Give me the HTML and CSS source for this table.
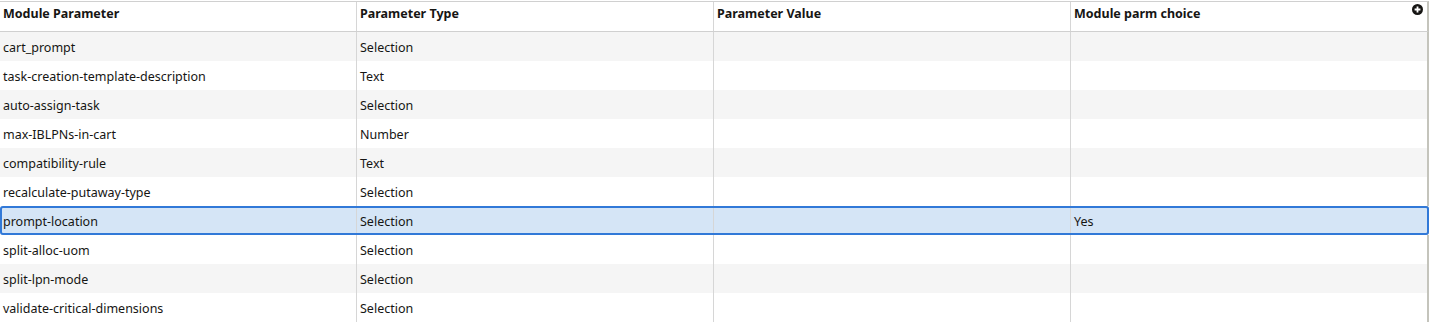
FILE: index.html
```html
<!DOCTYPE html>
<html>
<head>
<meta charset="utf-8">
<link rel="stylesheet" href="styles.css">
</head>
<body>
<div class="table">
  <div class="row head">
    <div class="cell">Module Parameter</div>
    <div class="cell">Parameter Type</div>
    <div class="cell">Parameter Value</div>
    <div class="cell">Module parm choice</div>
    <svg class="add" width="11" height="11" viewBox="0 0 11 11"><circle cx="5.5" cy="5.5" r="5.5" fill="#161513"/><path d="M5.5 2.6v5.8M2.6 5.5h5.8" stroke="#fff" stroke-width="1.8"/></svg>
  </div>
  <div class="row alt"><div class="cell">cart_prompt</div><div class="cell">Selection</div><div class="cell"></div><div class="cell"></div></div>
  <div class="row"><div class="cell">task-creation-template-description</div><div class="cell">Text</div><div class="cell"></div><div class="cell"></div></div>
  <div class="row alt"><div class="cell">auto-assign-task</div><div class="cell">Selection</div><div class="cell"></div><div class="cell"></div></div>
  <div class="row"><div class="cell">max-IBLPNs-in-cart</div><div class="cell">Number</div><div class="cell"></div><div class="cell"></div></div>
  <div class="row alt"><div class="cell">compatibility-rule</div><div class="cell">Text</div><div class="cell"></div><div class="cell"></div></div>
  <div class="row"><div class="cell">recalculate-putaway-type</div><div class="cell">Selection</div><div class="cell"></div><div class="cell"></div></div>
  <div class="row selected"><div class="cell">prompt-location</div><div class="cell">Selection</div><div class="cell"></div><div class="cell">Yes</div></div>
  <div class="row"><div class="cell">split-alloc-uom</div><div class="cell">Selection</div><div class="cell"></div><div class="cell"></div></div>
  <div class="row alt"><div class="cell">split-lpn-mode</div><div class="cell">Selection</div><div class="cell"></div><div class="cell"></div></div>
  <div class="row"><div class="cell">validate-critical-dimensions</div><div class="cell">Selection</div><div class="cell"></div><div class="cell"></div></div>
</div>
</body>
</html>
```

FILE: styles.css
```css
html, body {
  margin: 0;
  padding: 0;
  background: #fff;
}
body {
  font-family: "Noto Sans", "Open Sans", sans-serif;
  font-size: 12.5px;
  color: #161513;
  overflow: hidden;
}
.table {
  width: 1429px;
  padding-top: 1px;
}
.row {
  display: grid;
  grid-template-columns: 356px 357px 357px 357px;
  height: 29px;
  border-right: 2px solid #c4c4bc;
  box-sizing: border-box;
  position: relative;
}
.row.head {
  height: 31px;
  border-top: 1px solid #d0d0d0;
  border-bottom: 1px solid #d0d0d0;
  font-weight: 700;
}
.row.head .cell {
  padding-top: 0;
  padding-bottom: 7px;
}
.row.alt {
  background: #f5f5f5;
}
.row.selected {
  background: #d5e5f6;
  outline: 2px solid #3179d8;
  outline-offset: -2px;
  border-radius: 3px;
}
.cell {
  display: flex;
  align-items: center;
  padding-left: 3px;
  padding-top: 2px;
  border-left: 1px solid #d6d6d6;
  white-space: nowrap;
  overflow: hidden;
}
.cell:first-child {
  border-left: none;
}
.add {
  position: absolute;
  right: 4px;
  top: 2px;
}
```
